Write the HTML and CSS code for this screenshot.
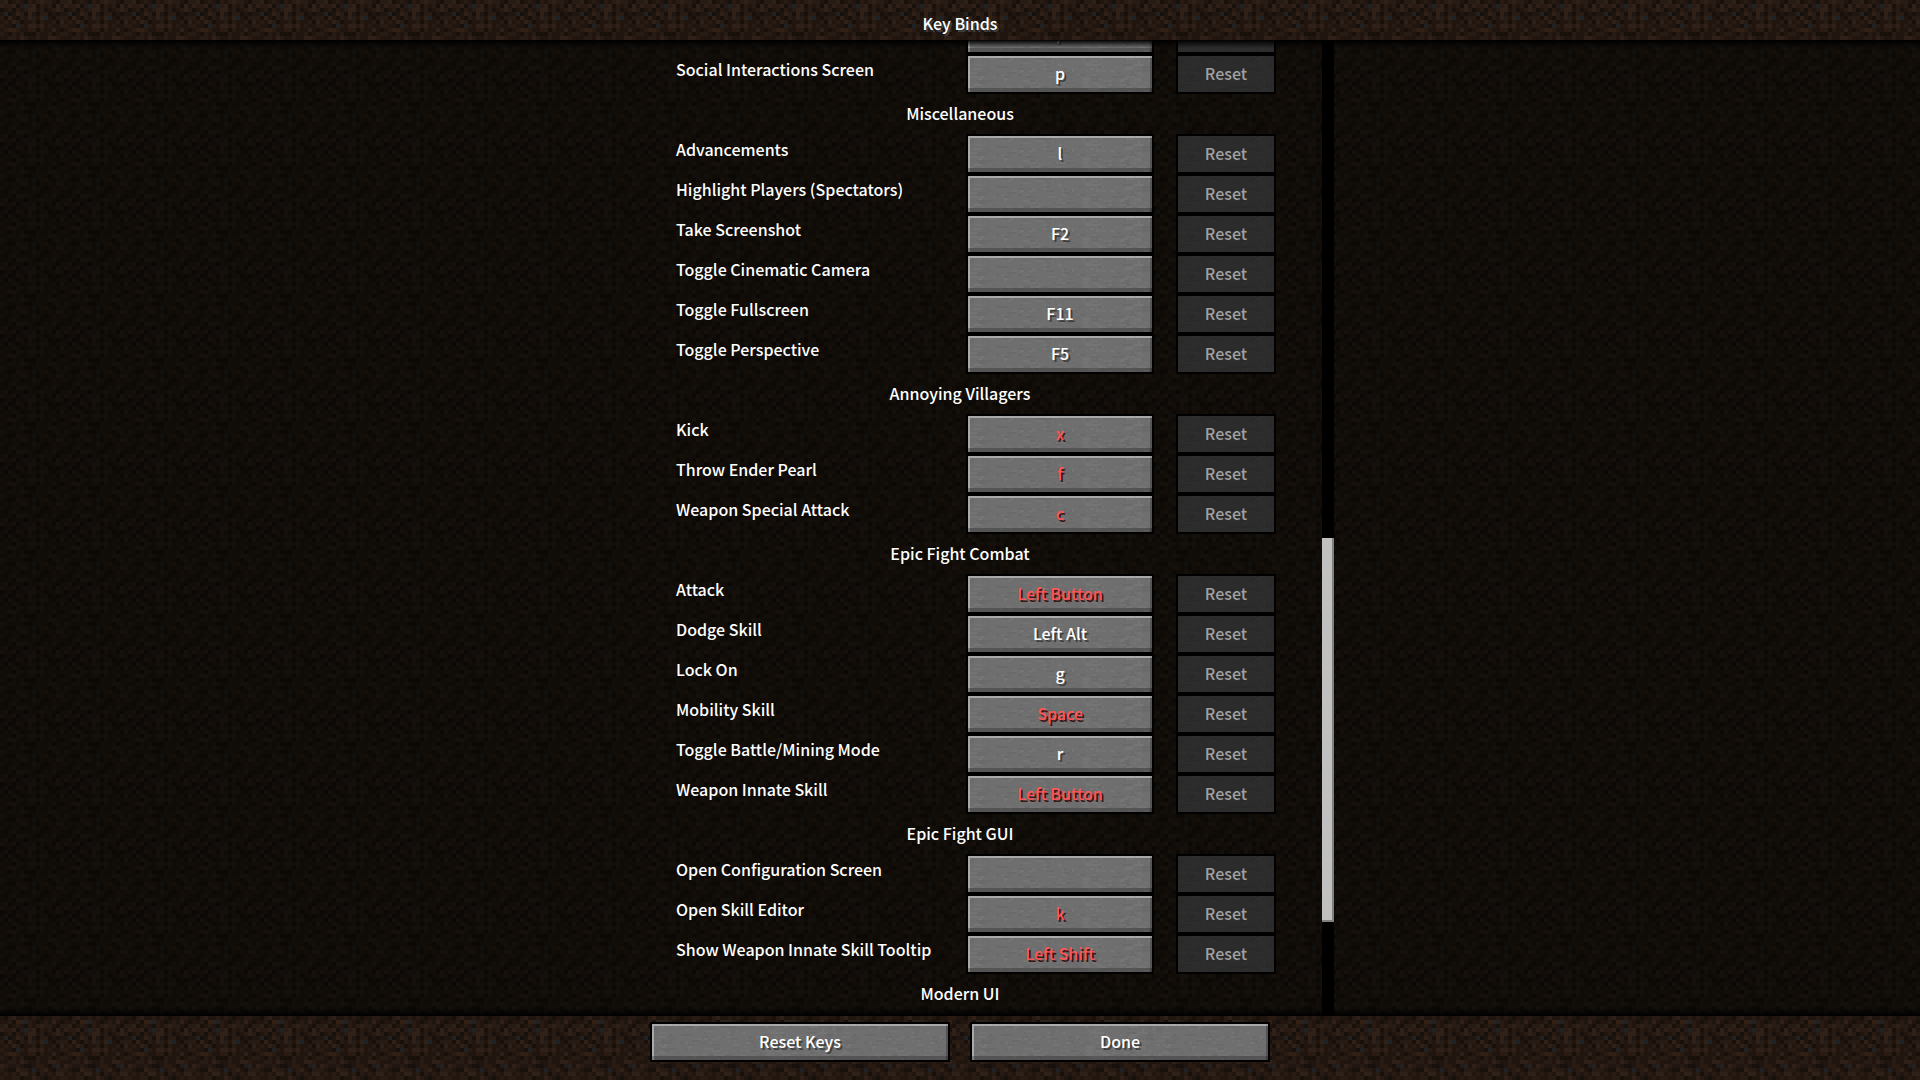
FILE: index.html
```html
<!DOCTYPE html>
<html lang="en">
<head>
    <meta charset="UTF-8">
    <meta name="viewport" content="width=device-width, initial-scale=1.0">
    <title>Key Binds</title>
    <link rel="stylesheet" href="styles.css">
    <script src="textures.js"></script>
</head>
<body>
    <header class="top-bar">
        <h1>Key Binds</h1>
    </header>

    <main class="pane">
        <div class="list">
            <div class="row">
                <span class="label"></span>
                <button class="key" aria-label="Open Command">/</button>
                <button class="reset" aria-label="Reset" disabled></button>
            </div>
            <div class="row">
                <span class="label" id="social">Social Interactions Screen</span>
                <button class="key" aria-labelledby="social">p</button>
                <button class="reset" disabled>Reset</button>
            </div>

            <h2>Miscellaneous</h2>
            <div class="row">
                <span class="label" id="advancements">Advancements</span>
                <button class="key" aria-labelledby="advancements">l</button>
                <button class="reset" disabled>Reset</button>
            </div>
            <div class="row">
                <span class="label" id="highlight">Highlight Players (Spectators)</span>
                <button class="key" aria-labelledby="highlight"></button>
                <button class="reset" disabled>Reset</button>
            </div>
            <div class="row">
                <span class="label" id="screenshot">Take Screenshot</span>
                <button class="key" aria-labelledby="screenshot">F2</button>
                <button class="reset" disabled>Reset</button>
            </div>
            <div class="row">
                <span class="label" id="cinematic">Toggle Cinematic Camera</span>
                <button class="key" aria-labelledby="cinematic"></button>
                <button class="reset" disabled>Reset</button>
            </div>
            <div class="row">
                <span class="label" id="fullscreen">Toggle Fullscreen</span>
                <button class="key" aria-labelledby="fullscreen">F11</button>
                <button class="reset" disabled>Reset</button>
            </div>
            <div class="row">
                <span class="label" id="perspective">Toggle Perspective</span>
                <button class="key" aria-labelledby="perspective">F5</button>
                <button class="reset" disabled>Reset</button>
            </div>

            <h2>Annoying Villagers</h2>
            <div class="row">
                <span class="label" id="kick">Kick</span>
                <button class="key conflict" aria-labelledby="kick">x</button>
                <button class="reset" disabled>Reset</button>
            </div>
            <div class="row">
                <span class="label" id="pearl">Throw Ender Pearl</span>
                <button class="key conflict" aria-labelledby="pearl">f</button>
                <button class="reset" disabled>Reset</button>
            </div>
            <div class="row">
                <span class="label" id="special">Weapon Special Attack</span>
                <button class="key conflict" aria-labelledby="special">c</button>
                <button class="reset" disabled>Reset</button>
            </div>

            <h2>Epic Fight Combat</h2>
            <div class="row">
                <span class="label" id="attack">Attack</span>
                <button class="key conflict" aria-labelledby="attack">Left Button</button>
                <button class="reset" disabled>Reset</button>
            </div>
            <div class="row">
                <span class="label" id="dodge">Dodge Skill</span>
                <button class="key" aria-labelledby="dodge">Left Alt</button>
                <button class="reset" disabled>Reset</button>
            </div>
            <div class="row">
                <span class="label" id="lock">Lock On</span>
                <button class="key" aria-labelledby="lock">g</button>
                <button class="reset" disabled>Reset</button>
            </div>
            <div class="row">
                <span class="label" id="mobility">Mobility Skill</span>
                <button class="key conflict" aria-labelledby="mobility">Space</button>
                <button class="reset" disabled>Reset</button>
            </div>
            <div class="row">
                <span class="label" id="mode">Toggle Battle/Mining Mode</span>
                <button class="key" aria-labelledby="mode">r</button>
                <button class="reset" disabled>Reset</button>
            </div>
            <div class="row">
                <span class="label" id="innate">Weapon Innate Skill</span>
                <button class="key conflict" aria-labelledby="innate">Left Button</button>
                <button class="reset" disabled>Reset</button>
            </div>

            <h2>Epic Fight GUI</h2>
            <div class="row">
                <span class="label" id="config">Open Configuration Screen</span>
                <button class="key" aria-labelledby="config"></button>
                <button class="reset" disabled>Reset</button>
            </div>
            <div class="row">
                <span class="label" id="editor">Open Skill Editor</span>
                <button class="key conflict" aria-labelledby="editor">k</button>
                <button class="reset" disabled>Reset</button>
            </div>
            <div class="row">
                <span class="label" id="tooltip">Show Weapon Innate Skill Tooltip</span>
                <button class="key conflict" aria-labelledby="tooltip">Left Shift</button>
                <button class="reset" disabled>Reset</button>
            </div>

            <h2>Modern UI</h2>
        </div>

        <div class="scroll-track">
            <div class="scroll-thumb"></div>
        </div>
    </main>

    <footer class="bottom-bar">
        <button class="key">Reset Keys</button>
        <button class="key">Done</button>
    </footer>
</body>
</html>
```
FILE: styles.css
```css
* {
    box-sizing: border-box;
    margin: 0;
    padding: 0;
}

body {
    display: flex;
    flex-direction: column;
    height: 100vh;
    overflow: hidden;
    background: #21170f var(--dirt);
    color: white;
    font: 500 16px/22px "Noto Sans CJK SC", "Noto Sans", sans-serif;
}

h1, h2 {
    font-size: 16px;
    font-weight: 500;
    text-align: center;
}

.top-bar {
    height: 40px;
    padding-top: 12px;
    text-shadow: 2px 2px #3e4144;
}

/* Scrolling list */
.pane {
    position: relative;
    flex: 1;
    min-height: 0;
    display: grid;
    grid-template-columns: 1fr 632px 1fr;
    overflow: hidden;
    background:
        linear-gradient(rgba(1, 2, 0, 0.55), rgba(1, 2, 0, 0.55)),
        var(--dirt) 0 30px #21170f;
}

/* Fade under the two bars */
.pane::after {
    content: "";
    position: absolute;
    inset: 0;
    pointer-events: none;
    background:
        linear-gradient(black, transparent) top / 100% 8px no-repeat,
        linear-gradient(transparent, black) bottom / 100% 8px no-repeat;
}

.list {
    grid-column: 2;
    margin-top: -26px;
}

.list h2 {
    height: 40px;
    padding-top: 8px;
}

.row {
    display: grid;
    grid-template-columns: minmax(0, 1fr) 188px 100px;
    column-gap: 22px;
    height: 40px;
    padding-left: 32px;
}

.label {
    padding-top: 4px;
    white-space: nowrap;
}

button {
    height: 40px;
    padding-bottom: 2px;
    border: 2px solid black;
    font: inherit;
    color: white;
}

.key {
    background: #6f6f6f var(--stone);
    box-shadow:
        inset 0 -4px rgba(0, 0, 0, 0.24),
        inset 2px 2px rgba(255, 255, 255, 0.4),
        inset -2px 0 rgba(0, 0, 0, 0.24);
    text-shadow: 2px 2px #3f3f3f;
}

.conflict {
    color: #ff5555;
    text-shadow: 2px 2px #3f1515;
}

.reset {
    background: #2c2c2c var(--slate);
    color: #a0a0a0;
}

.scroll-track {
    width: 12px;
    margin-left: 46px;
    background: black;
}

.scroll-thumb {
    height: 384px;
    margin-top: 498px;
    background: #c0c0c0;
    box-shadow: inset -2px -2px #808080;
}

.bottom-bar {
    display: flex;
    justify-content: center;
    gap: 20px;
    height: 64px;
    padding-top: 6px;
}

.bottom-bar .key {
    width: 300px;
}
```
FILE: textures.js
```javascript
// 16x16 dirt tile, one letter per pixel
const dirtRows = [
    'bldmbmdbmblbbmdb',
    'lbbldbgbldbmbdlm',
    'dmbdbmbllmbdmblb',
    'mgdmlbdlmdbbdmdm',
    'bdlmdbmlbmlgmdbb',
    'mbmlbdmmbdbmmbdl',
    'bmmdgbmllblmbmmb',
    'mbllbmmbbdbmmlmd',
    'bmdbmbdddbmmbdmb',
    'mmbbmlbmmbmmllbm',
    'lbmmbmddmbbmdbgm',
    'bmddlbbmgmblmdbb',
    'mbmbmllmbdbmbmll',
    'bmmbbdmmlbmdmbmb',
    'mdblmmbmbmdmmbbm',
    'mmbdllgbmdmbmlmd'
];
const dirtColors = { d: '#17100b', m: '#20160f', b: '#271b13', l: '#2f2118', g: '#202326' };

function toBackground(width, height, shapes) {
    const svg = `<svg xmlns="http://www.w3.org/2000/svg" width="${width}" height="${height}" shape-rendering="crispEdges">${shapes}</svg>`;
    return `url("data:image/svg+xml,${encodeURIComponent(svg)}")`;
}

function dirt() {
    let shapes = '';
    dirtRows.forEach((row, y) => {
        [...row].forEach((c, x) => {
            shapes += `<rect x="${x * 4}" y="${y * 4}" width="4" height="4" fill="${dirtColors[c]}"/>`;
        });
    });
    return toBackground(64, 64, shapes);
}

// Short horizontal flecks, same result on every load
function flecks(colors) {
    let seed = 7;
    const next = (max) => {
        seed = (seed * 16807) % 2147483647;
        return seed % max;
    };
    let shapes = '';
    for (let i = 0; i < 260; i++) {
        shapes += `<rect x="${next(92) * 2}" y="${next(18) * 2}" width="${2 + next(4) * 2}" height="2" fill="${colors[next(colors.length)]}"/>`;
    }
    return toBackground(184, 36, shapes);
}

const root = document.documentElement.style;
root.setProperty('--dirt', dirt());
root.setProperty('--stone', flecks(['#6a6a6a', '#737373', '#6c6c6c', '#757575']));
root.setProperty('--slate', flecks(['#292929', '#2e2e2e', '#2a2a2a']));
```
